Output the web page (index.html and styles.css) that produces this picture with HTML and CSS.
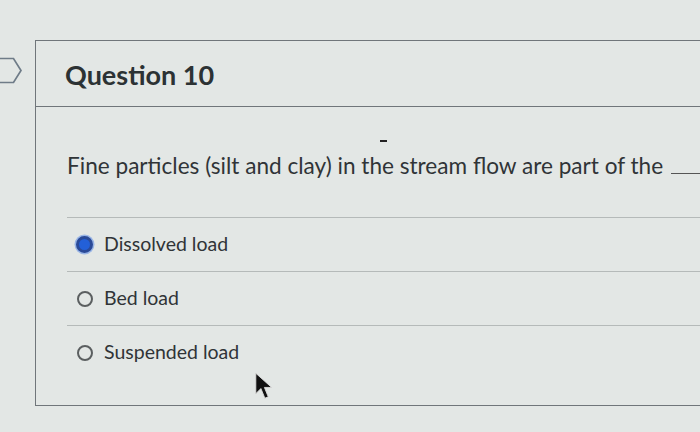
FILE: index.html
```html
<!DOCTYPE html>
<html lang="en">
<head>
    <meta charset="UTF-8">
    <meta name="viewport" content="width=device-width, initial-scale=1.0">
    <title>Question 10</title>
    <link rel="stylesheet" href="styles.css">
</head>
<body>

    <div class="page">
        <div class="side">
            <svg class="nav-arrow" width="24" height="28" viewBox="0 0 24 28">
                <path d="M-4 1.5 H13.5 L21 13.5 L13.5 25.5 H-4" fill="none" stroke="#6f7c88" stroke-width="1.7"/>
            </svg>
        </div>

        <div class="question">
            <div class="question-header">
                <h2>Question 10</h2>
            </div>
            <div class="question-body">
                <span class="mark"></span>
                <p class="question-text">Fine particles (silt and clay) in the stream flow are part of the <span class="blank"></span></p>

                <div class="answers">
                    <label class="answer">
                        <span class="radio checked"></span>
                        <span class="answer-text">Dissolved load</span>
                    </label>
                    <label class="answer">
                        <span class="radio"></span>
                        <span class="answer-text">Bed load</span>
                    </label>
                    <label class="answer">
                        <span class="radio"></span>
                        <span class="answer-text">Suspended load</span>
                    </label>
                </div>

                <!-- mouse pointer -->
                <svg class="pointer" width="26" height="34" viewBox="0 0 22 30">
                    <path d="M2 2 L2 20 L6.5 15.5 L10 24 L13 22.8 L9.6 14.5 L16 14.5 Z" fill="#111" stroke="#ddd" stroke-width="0.8"/>
                </svg>
            </div>
        </div>
    </div>

</body>
</html>
```

FILE: styles.css
```css
body {
    margin: 0;
    padding: 0;
    background-color: #e3e7e5;
    font-family: Lato, 'Open Sans', sans-serif;
    color: #303437;
    overflow: hidden;
}
.page {
    display: flex;
    padding-top: 40px;
    height: 392px;
}
.side {
    width: 35px;
    flex-shrink: 0;
}
.nav-arrow {
    display: block;
    margin-top: 17px;
}
.question {
    flex: 1;
    margin-right: -30px;
    border: 1px solid #70767a;
    border-right: none;
    height: 364px;
}
.question-header {
    height: 65px;
    border-bottom: 1px solid #70767a;
    display: flex;
    align-items: center;
    padding-left: 29px;
}
.question-header h2 {
    margin: 0;
    font-size: 27px;
    font-weight: bold;
    color: #2c3234;
    padding-top: 2px;
}
.question-body {
    position: relative;
    padding-left: 31px;
    padding-top: 44px;
}
.question-text {
    margin: 0;
    font-size: 22.6px;
    line-height: 30px;
    white-space: nowrap;
}
.blank {
    display: inline-block;
    width: 40px;
    border-bottom: 1px solid #555;
    margin-left: 2px;
}
.mark {
    position: absolute;
    left: 344px;
    top: 33px;
    width: 7px;
    height: 2px;
    background-color: #222;
}
.answers {
    margin-top: 36px;
}
.answer {
    display: flex;
    align-items: center;
    height: 53px;
    border-top: 1px solid #b5bab9;
    padding-left: 9px;
}
.answer .radio {
    width: 12px;
    height: 12px;
    border: 2px solid #5b5f60;
    border-radius: 50%;
    margin-right: 11px;
    margin-left: 1px;
    flex-shrink: 0;
}
.answer .radio.checked {
    width: 11px;
    height: 11px;
    border: 3px solid #2a4a98;
    background-color: #2360d8;
    box-shadow: 0 0 0 1.5px #9ab6e6;
    margin-left: 0;
    margin-right: 11px;
}
.answer-text {
    font-size: 19.5px;
    padding-bottom: 3px;
}
.pointer {
    position: absolute;
    left: 217px;
    top: 264px;
}
```
